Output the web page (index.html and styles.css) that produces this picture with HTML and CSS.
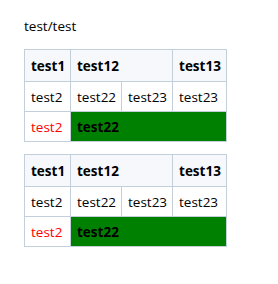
FILE: index.html
```html
<!DOCTYPE html>
<html>
<head>
<meta charset="utf-8">
<link rel="stylesheet" href="styles.css">
</head>
<body>
<p class="title">test/test</p>
<table class="grid">
  <colgroup><col class="c1"><col class="c2"><col class="c3"><col class="c4"></colgroup>
  <tr class="head"><th>test1</th><th colspan="2">test12</th><th>test13</th></tr>
  <tr><td>test2</td><td>test22</td><td>test23</td><td>test23</td></tr>
  <tr><td class="red">test2</td><td class="green" colspan="3">test22</td></tr>
</table>
<table class="grid">
  <colgroup><col class="c1"><col class="c2"><col class="c3"><col class="c4"></colgroup>
  <tr class="head"><th>test1</th><th colspan="2">test12</th><th>test13</th></tr>
  <tr><td>test2</td><td>test22</td><td>test23</td><td>test23</td></tr>
  <tr><td class="red">test2</td><td class="green" colspan="3">test22</td></tr>
</table>
</body>
</html>
```
FILE: styles.css
```css
body {
  margin: 0;
  padding: 18px 24px;
  font-family: "Open Sans", "Noto Sans", sans-serif;
  font-size: 13.5px;
  color: #000;
  background: #fff;
}
.title {
  margin: 0 0 15px 0;
  line-height: 16px;
}
.grid {
  border-collapse: collapse;
  table-layout: fixed;
  width: 203px;
  margin-bottom: 12px;
}
.c1 { width: 46px; }
.c2 { width: 51px; }
.c3 { width: 51px; }
.c4 { width: 54px; }
.grid th, .grid td {
  border: 1px solid #c3d0dc;
  padding: 0 6px;
  text-align: left;
  white-space: nowrap;
  height: 29px;
  line-height: 18px;
}
.grid .head th {
  background: #f6f8fc;
  font-weight: bold;
  height: 31px;
}
.red { color: #f00; }
.green { background: #008000; font-weight: bold; }
```
